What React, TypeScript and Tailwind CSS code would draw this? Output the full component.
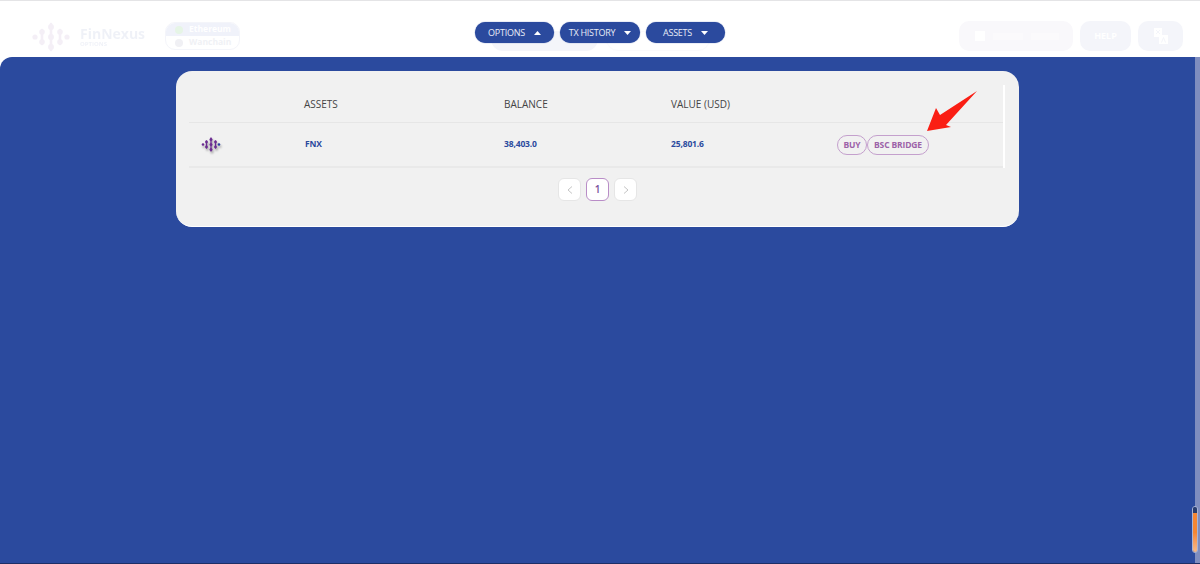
import React from "react";

function Logo({ className, end }: { className: string; end?: string }) {
  return (
    <svg className={className} viewBox="0 0 38 30" fill="none">
      <circle cx="3" cy="15" r="2.6" fill="currentColor" />
      <path d="M10 8v14M19 2v26M28 8v14" stroke="currentColor" strokeWidth="2.6" strokeLinecap="round" />
      <circle cx="10" cy="10" r="2.8" fill="currentColor" />
      <circle cx="10" cy="20" r="2.8" fill="currentColor" />
      <circle cx="19" cy="5" r="3" fill="currentColor" />
      <circle cx="19" cy="15" r="3" fill="currentColor" />
      <circle cx="19" cy="25" r="3" fill="currentColor" />
      <circle cx="28" cy="10" r="2.8" fill="currentColor" />
      <circle cx="28" cy="20" r="2.8" fill="currentColor" />
      <circle cx="35" cy="15" r="2.6" fill={end ?? "currentColor"} />
    </svg>
  );
}

function NavButton({ label, up, width }: { label: string; up?: boolean; width: string }) {
  return (
    <button className={`flex h-[21px] items-center justify-center gap-[9px] rounded-full bg-[#2b4a9e] pt-px text-[9px] tracking-[-0.25px] text-[#e8ecf7] shadow-[0_0_1px_#2b4a9e] ${width}`}>
      <span>{label}</span>
      <svg width="7" height="4" viewBox="0 0 7 4" fill="#ffffff">
        <path d={up ? "M0 4 3.5 0 7 4Z" : "M0 0 7 0 3.5 4Z"} />
      </svg>
    </button>
  );
}

function Header() {
  return (
    <div className="relative flex h-[57px] items-start border-t border-t-[#e4e4e6] bg-white">
      <div className="ml-[32px] mt-[21px] flex items-center opacity-[0.07]">
        <Logo className="h-[30px] w-[38px] text-[#6b2c91]" />
        <div className="ml-[10px] flex flex-col text-[#2b4a9e]">
          <span className="text-[14px] font-bold leading-[15px]">FinNexus</span>
          <span className="text-[6px] font-bold leading-[7px]">OPTIONS</span>
        </div>
      </div>
      <div className="ml-[20px] mt-[21px] flex h-[28px] w-[75px] flex-col overflow-hidden rounded-[10px] border border-[#f4f5fa] text-[8.5px] font-bold">
        <div className="flex h-[13px] items-center gap-[6px] bg-[#f0f2fa] pl-[9px] text-white">
          <span className="h-[8px] w-[8px] rounded-full bg-[#e6f5e6]" />
          <span>Ethereum</span>
        </div>
        <div className="flex flex-1 items-center gap-[6px] pl-[9px] text-[#f0f1f5]">
          <span className="h-[8px] w-[8px] rounded-full bg-[#f0f0f4]" />
          <span>Wanchain</span>
        </div>
      </div>
      <div className="ml-[251px] flex">
        <div className="mt-[30px] h-[20px] w-[107px] rounded-b-[12px] bg-[#f4f5fa]" />
        <div className="ml-[8px] mt-[30px] h-[20px] w-[104px] rounded-b-[12px] border border-[#fafafc]" />
      </div>
      <div className="ml-auto mr-[17px] mt-[20px] flex gap-[7px]">
        <div className="flex h-[30px] w-[114px] items-center gap-[8px] rounded-[10px] bg-[#f9f8fb] pl-[16px]">
          <span className="h-[10px] w-[10px] bg-white" />
          <span className="h-[7px] w-[30px] bg-[#fbfafc]" />
          <span className="h-[7px] w-[28px] bg-[#fbfafc]" />
        </div>
        <div className="flex h-[30px] w-[51px] items-center justify-center rounded-[10px] bg-[#f4f5fa] text-[9px] font-bold text-white">HELP</div>
        <div className="flex h-[30px] w-[45px] items-center justify-center rounded-[10px] bg-[#f4f5fa]">
          <svg width="16" height="18" viewBox="0 0 16 18">
            <path d="M1 1h8v9H1z" fill="#ffffff" />
            <path d="M6 8h9v9H6z" fill="#ffffff" />
            <path d="M3 3l4 4M7 3 3 7" stroke="#f4f5fa" />
            <path d="M8.5 15.5l2-5 2 5" stroke="#f4f5fa" fill="none" />
          </svg>
        </div>
      </div>
      <nav className="absolute left-[475px] top-[21px] flex gap-[6px]">
        <NavButton label="OPTIONS" up width="w-[79px]" />
        <NavButton label="TX HISTORY" width="w-[80px]" />
        <NavButton label="ASSETS" width="w-[79px]" />
      </nav>
    </div>
  );
}

function PageButton({ children, active }: { children: React.ReactNode; active?: boolean }) {
  return (
    <div className={`flex h-[23px] w-[23px] items-center justify-center rounded-[6px] bg-white text-[10px] ${active ? "border border-[#b98dc7] font-semibold text-[#7a4f9c]" : "border border-[#e6e6e6] text-[#c4c4c4]"}`}>
      {children}
    </div>
  );
}

function PillButton({ label, width }: { label: string; width: string }) {
  return (
    <button className={`flex h-[20px] items-center justify-center rounded-full border border-[#c4a0cd] pt-px text-[8.5px] font-bold text-[#9c62a8] ${width}`}>
      {label}
    </button>
  );
}

function AssetsCard() {
  return (
    <div className="relative h-[156px] w-[843px] rounded-[16px] border-b border-b-white bg-[#f1f1f1] pl-[13px] pr-[14px] pt-[14px]">
      <div className="border-r-2 border-r-white">
        <div className="grid h-[38px] grid-cols-[115px_200px_167px_166px_1fr] items-center border-b border-b-[#e6e6e6] pt-px text-[10px] text-[#444444]">
          <span />
          <span>ASSETS</span>
          <span>BALANCE</span>
          <span>VALUE (USD)</span>
          <span />
        </div>
        <div className="grid h-[45px] grid-cols-[115px_200px_167px_166px_1fr] items-center border-b-2 border-b-[#e9e9e9] text-[8.5px] font-bold tracking-[-0.15px] text-[#2b4a9e]">
          <span className="pl-[12px]">
            <Logo className="h-[15px] w-[20px] text-[#6b2c91] drop-shadow-[1px_2px_1px_rgba(0,0,0,0.35)]" end="#2b3f9e" />
          </span>
          <span className="pl-px">FNX</span>
          <span>38,403.0</span>
          <span>25,801.6</span>
          <div className="flex">
            <PillButton label="BUY" width="w-[30px]" />
            <PillButton label="BSC BRIDGE" width="w-[62px]" />
          </div>
        </div>
      </div>
      <div className="mt-[10px] flex justify-center gap-[5px] pl-px">
        <PageButton>
          <svg width="6" height="8" viewBox="0 0 6 8" fill="none" stroke="#c4c4c4"><path d="M5 .5 1 4l4 3.5" /></svg>
        </PageButton>
        <PageButton active>1</PageButton>
        <PageButton>
          <svg width="6" height="8" viewBox="0 0 6 8" fill="none" stroke="#c4c4c4"><path d="M1 .5 5 4 1 7.5" /></svg>
        </PageButton>
      </div>
      <svg className="absolute left-[750px] top-[19px]" width="52" height="42" viewBox="0 0 52 42" fill="#fa1e14">
        <path d="M51 1 20 35 25 37 1 41 10 18 14 25Z" />
      </svg>
    </div>
  );
}

export default function App() {
  return (
    <div className="flex h-[564px] w-[1200px] flex-col overflow-hidden bg-white font-['Open_Sans',sans-serif]">
      <Header />
      <div className="flex flex-1 border-b border-b-[#1d2f66]">
        <main className="flex flex-1 justify-center rounded-tl-[12px] bg-[#2b4a9e] pt-[14px]">
          <AssetsCard />
        </main>
        <div className="relative w-[5px] bg-[#7f8dbf]">
          <div className="absolute left-[-3px] top-[449px] flex h-[47px] w-[6px] flex-col overflow-hidden rounded-full border border-[#aab4d4]">
            <div className="h-[6px] bg-[#2a3d6e]" />
            <div className="flex-1 bg-gradient-to-b from-[#f58634] via-[#f58634] to-[#f5b98a]" />
          </div>
        </div>
      </div>
    </div>
  );
}
